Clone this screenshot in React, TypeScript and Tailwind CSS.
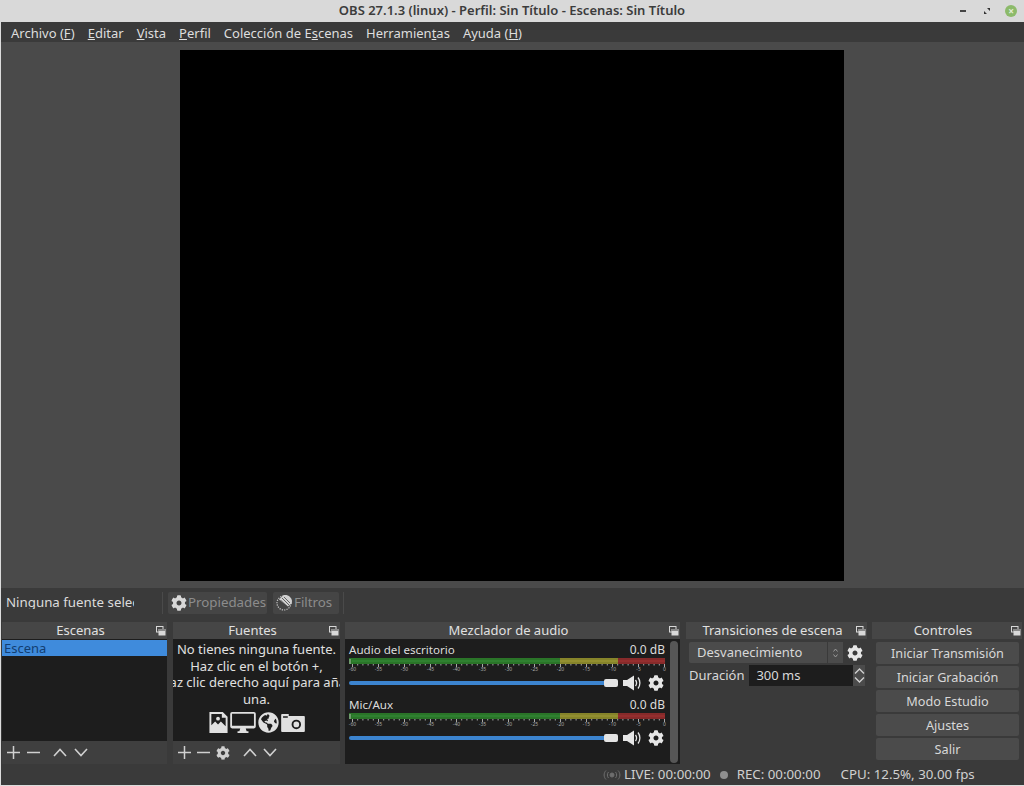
import React from "react";
import { FaCog, FaGlobeAmericas } from "react-icons/fa";

const menus: [string, string, string][] = [
  ["Archivo (", "F", ")"],
  ["", "E", "ditar"],
  ["", "V", "ista"],
  ["", "P", "erfil"],
  ["Colección de E", "s", "cenas"],
  ["Herramien", "t", "as"],
  ["Ayuda (", "H", ")"],
];

const scale = [-60, -55, -50, -45, -40, -35, -30, -25, -20, -15, -10, -5, 0];

// small ticks of the meter, one per dB, a longer one every 5
const ticks = Array.from({ length: 61 }, (_, i) => {
  const x = 3.5 + i * 5.2;
  return `M${x} 0v${i % 5 === 0 ? 3 : 1.5}`;
}).join("");

const FloatIcon = () => (
  <svg width="10" height="10" viewBox="0 0 10 10" className="shrink-0">
    <rect x="0.5" y="0.5" width="6.5" height="5.5" fill="none" stroke="#d8d8d8" />
    <rect x="2.5" y="3" width="7" height="6.5" fill="#d8d8d8" />
    <rect x="2.5" y="3" width="7" height="2" fill="#8a8a8a" />
  </svg>
);

const Plus = () => (
  <svg width="13" height="13" viewBox="0 0 13 13" stroke="#d0d0d0" strokeWidth="1.5">
    <path d="M0 6.5h13M6.5 0v13" />
  </svg>
);
const Minus = () => (
  <svg width="13" height="13" viewBox="0 0 13 13" stroke="#d0d0d0" strokeWidth="1.5">
    <path d="M0 6.5h13" />
  </svg>
);
const Up = () => (
  <svg width="14" height="9" viewBox="0 0 14 9" fill="none" stroke="#d0d0d0" strokeWidth="1.6">
    <path d="M1 8l6-6.5L13 8" />
  </svg>
);
const Down = () => (
  <svg width="14" height="9" viewBox="0 0 14 9" fill="none" stroke="#d0d0d0" strokeWidth="1.6">
    <path d="M1 1l6 6.5L13 1" />
  </svg>
);

const Dock = ({ title, className, children }: { title: string; className: string; children: React.ReactNode }) => (
  <div className={`flex flex-col ${className}`}>
    <div className="relative flex h-[17px] shrink-0 items-center justify-center bg-[#464646] pr-[8px] text-[13px] leading-none text-[#e0e0e0]">
      {title}
      <span className="absolute right-[1px] top-[4px]">
        <FloatIcon />
      </span>
    </div>
    {children}
  </div>
);

const Meter = () => (
  <div className="w-[316px]">
    <div className="flex h-[6px] bg-[#222]">
      <div className="flex w-[211px] items-center bg-[#2a7428]">
        <div className="h-[5px] w-[2px] bg-[#6f9a6c]" />
        <div className="ml-[1px] h-[2px] flex-1 bg-[#2f8030]" />
      </div>
      <div className="flex w-[58px] items-center bg-[#86842a]">
        <div className="h-[2px] flex-1 bg-[#938f30]" />
      </div>
      <div className="flex w-[47px] items-center bg-[#862a2a]">
        <div className="h-[2px] flex-1 bg-[#942e2e]" />
      </div>
    </div>
    <svg width="316" height="3" className="block" stroke="#a8a8a8" strokeWidth="1">
      <path d={ticks} />
    </svg>
    <div className="flex h-[5px] justify-between pl-[3px]">
      {scale.map((n) => (
        <div key={n} className="flex w-[1px] justify-center">
          <span className="text-[5px] leading-[5px] text-[#a8a8a8]">{n}</span>
        </div>
      ))}
    </div>
  </div>
);

const Speaker = () => (
  <svg width="18" height="16" viewBox="0 0 18 16" fill="#e6e6e6">
    <path d="M0 5h4l7-4.500v15L4 11H0z" />
    <path d="M12.500 5c1.300 1.800 1.300 4.200 0 6M15 2.500c2.500 3.200 2.500 7.800 0 11" fill="none" stroke="#e6e6e6" strokeWidth="1.3" />
  </svg>
);

const Strip = ({ name }: { name: string }) => (
  <div className="flex flex-col">
    <div className="flex h-[16px] w-[316px] items-center justify-between text-[11.6px] leading-none text-[#dcdcdc]">
      <span>{name}</span>
      <span className="text-[12px]">0.0 dB</span>
    </div>
    <Meter />
    <div className="mt-[1px] flex h-[20px] w-[316px] items-center">
      <div className="h-[4px] w-[255px] rounded-l-sm bg-[#3c84cf]" />
      <div className="h-[8px] w-[14px] rounded-[2px] bg-[#e4e4e4]" />
      <span className="ml-[5px]">
        <Speaker />
      </span>
      <FaCog className="ml-[7px] text-[#e6e6e6]" size={16} />
    </div>
  </div>
);

const Btn = ({ children }: { children: React.ReactNode }) => (
  <div className="flex h-[22px] items-center justify-center rounded-[2px] bg-[#4b4b4b] text-[12.7px] leading-none text-[#d8d8d8]">
    {children}
  </div>
);

export default function App() {
  return (
    <div
      className="flex h-[786px] w-[1024px] flex-col overflow-hidden bg-[#dcdcdc] pb-[1px] pl-[1px]"
      style={{ fontFamily: '"Noto Sans", sans-serif' }}
    >
      {/* title bar */}
      <div className="-ml-[1px] relative flex h-[22px] shrink-0 items-center justify-center bg-[#d9d9d9] text-[13px] font-semibold text-[#3c3c3c]">
        OBS 27.1.3 (linux) - Perfil: Sin Título - Escenas: Sin Título
        <div className="absolute right-[7px] top-[5px] flex items-center">
          <div className="h-[2px] w-[6px] bg-[#444]" />
          <svg width="6" height="6" viewBox="0 0 6 6" fill="#333" className="ml-[18px]">
            <path d="M3 0h3v3zM3 6H0V3z" />
          </svg>
          <div className="ml-[15px] flex h-[12px] w-[12px] items-center justify-center rounded-full bg-[#8cba6a] text-[10px] font-bold leading-none text-[#e4eed8]">
            ×
          </div>
        </div>
      </div>
      {/* menu */}
      <div className="flex h-[20px] shrink-0 items-center gap-[13px] bg-[#3a3a3a] pl-[10px] pt-[2px] text-[13px] leading-none text-[#dedede]">
        {menus.map(([a, b, c]) => (
          <span key={a + b}>
            {a}
            <u>{b}</u>
            {c}
          </span>
        ))}
      </div>
      {/* preview */}
      <div className="flex h-[546px] shrink-0 justify-center bg-[#4a4a4a] pr-[1px] pt-[8px]">
        <div className="h-[531px] w-[664px] bg-black" />
      </div>
      {/* source toolbar */}
      <div className="flex h-[29px] shrink-0 items-center bg-[#3a3a3a] text-[13.3px] leading-none">
        <div className="w-[133px] overflow-hidden whitespace-nowrap pl-[5px] text-[#dcdcdc]">Ninguna fuente seleccionada</div>
        <div className="ml-[28px] h-[22px] w-[1px] bg-[#4a4a4a]" />
        <div className="ml-[5px] flex h-[22px] w-[99px] items-center gap-[1px] rounded-[2px] bg-[#454545] pl-[3px] text-[#8c8c8c]">
          <FaCog className="text-[#d8d8d8]" size={16} />
          Propiedades
        </div>
        <div className="ml-[6px] flex h-[22px] w-[66px] items-center gap-[1px] rounded-[2px] bg-[#454545] pl-[3px] text-[#8c8c8c]">
          <svg width="17" height="17" viewBox="0 0 17 17" className="shrink-0">
            <circle cx="8" cy="9" r="7" fill="none" stroke="#c8c8c8" strokeWidth="1.2" strokeDasharray="1.2 1.2" />
            <path d="M3 5.500L7 1.500c2-1 5-.5 7 1.500s2.500 4.500 1.500 6.500l-3.500 3z" fill="#d0d0d0" />
            <path d="M6 4l7 7M8 3l6 6M4.500 6l6 6" stroke="#454545" strokeWidth="0.8" />
          </svg>
          Filtros
        </div>
        <div className="ml-[4px] h-[22px] w-[1px] bg-[#4a4a4a]" />
      </div>
      {/* docks */}
      <div className="flex h-[147px] shrink-0 gap-[5px] bg-[#3a3a3a] pl-[1px] pt-[5px]">
        <Dock title="Escenas" className="w-[165px]">
          <div className="flex-1 bg-[#1d1d1d] pt-[1px]">
            <div className="flex h-[16px] items-center bg-[#3f8bdc] pl-[2px] text-[13px] leading-none text-[#123e72]">Escena</div>
          </div>
          <div className="flex h-[23px] items-center gap-[7px] bg-[#3f3f3f] pl-[5px]">
            <Plus />
            <Minus />
            <span className="ml-[6px]">
              <Up />
            </span>
            <Down />
          </div>
        </Dock>
        <Dock title="Fuentes" className="ml-[1px] w-[167px]">
          <div className="flex flex-1 flex-col items-center overflow-hidden bg-[#1d1d1d] pt-[2px] text-center text-[13px] leading-[16.500px] text-[#e0e0e0]">
            <div>No tienes ninguna fuente.</div>
            <div>Haz clic en el botón +,</div>
            <div className="flex w-full justify-center whitespace-nowrap">o haz clic derecho aquí para añadir</div>
            <div>una.</div>
            <div className="mt-[5px] flex items-center gap-[2px]">
              <svg width="19" height="21" viewBox="0 0 19 22" fill="#e0e0e0">
                <path fillRule="evenodd" d="M0 0h14l5 5v17H0zM2 2v12l4-4 3 3 3-3 5 5V6h-4V2z" />
                <circle cx="9" cy="7" r="2" />
              </svg>
              <svg width="26" height="21" viewBox="0 0 28 23" fill="#e0e0e0">
                <path fillRule="evenodd" d="M2 0h24a2 2 0 0 1 2 2v14a2 2 0 0 1-2 2H17l1 3h2v2H8v-2h2l1-3H2a2 2 0 0 1-2-2V2a2 2 0 0 1 2-2zM2 2v13h24V2z" />
              </svg>
              <FaGlobeAmericas className="text-[#e0e0e0]" size={21} />
              <svg width="24" height="18" viewBox="0 0 25 19" fill="#e0e0e0">
                <path fillRule="evenodd" d="M1 0h7v2h16a1 1 0 0 1 1 1v15a1 1 0 0 1-1 1H1a1 1 0 0 1-1-1V1a1 1 0 0 1 1-1zM2 4h5V2.500H2zM16 6a5 5 0 1 0 0 10 5 5 0 0 0 0-10zm0 2a3 3 0 1 1 0 6 3 3 0 0 1 0-6z" />
              </svg>
            </div>
          </div>
          <div className="flex h-[23px] items-center gap-[6px] bg-[#3f3f3f] pl-[5px]">
            <Plus />
            <Minus />
            <FaCog className="text-[#d0d0d0]" size={14} />
            <span className="ml-[7px]">
              <Up />
            </span>
            <Down />
          </div>
        </Dock>
        <Dock title="Mezclador de audio" className="w-[335px]">
          <div className="relative flex flex-1 flex-col gap-[4px] bg-[#1d1d1d] pl-[4px] pt-[3px]">
            <Strip name="Audio del escritorio" />
            <Strip name="Mic/Aux" />
            <div className="absolute bottom-[1px] right-[2px] top-[2px] w-[8px] rounded bg-[#565656]" />
          </div>
        </Dock>
        <Dock title="Transiciones de escena" className="ml-[1px] w-[181px]">
          <div className="flex flex-col gap-[2px] pt-[3px] text-[13px] leading-none text-[#d8d8d8]">
            <div className="flex items-center">
              <div className="ml-[3px] flex h-[21px] w-[138px] items-center rounded-l-[2px] bg-[#4b4b4b] pl-[8px]">Desvanecimiento</div>
              <div className="flex h-[21px] w-[16px] flex-col items-center justify-center border-l border-[#3a3a3a] bg-[#4b4b4b]">
                <svg width="5" height="10" viewBox="0 0 5 10" fill="none" stroke="#9a9a9a">
                  <path d="M.5 3.500l2-2.500 2 2.500M.5 6.500l2 2.500 2-2.500" />
                </svg>
              </div>
              <FaCog className="ml-[4px] text-[#e6e6e6]" size={16} />
            </div>
            <div className="flex items-center">
              <span className="ml-[3px]">Duración</span>
              <div className="ml-[5px] flex h-[21px] w-[104px] items-center bg-[#1d1d1d] pl-[7px]">300 ms</div>
              <div className="flex h-[21px] w-[12px] flex-col items-center justify-center gap-[1px] bg-[#4b4b4b]">
                <svg width="11" height="8" viewBox="0 0 11 8" fill="none" stroke="#d0d0d0" strokeWidth="1.4">
                  <path d="M1 6.500L5.500 2 10 6.500" />
                </svg>
                <svg width="11" height="8" viewBox="0 0 11 8" fill="none" stroke="#d0d0d0" strokeWidth="1.4">
                  <path d="M1 1.500L5.500 6 10 1.500" />
                </svg>
              </div>
            </div>
          </div>
        </Dock>
        <Dock title="Controles" className="w-[150px]">
          <div className="flex flex-col gap-[2px] pl-[4px] pr-[3px] pt-[3px]">
            <Btn>Iniciar Transmisión</Btn>
            <Btn>Iniciar Grabación</Btn>
            <Btn>Modo Estudio</Btn>
            <Btn>Ajustes</Btn>
            <Btn>Salir</Btn>
          </div>
        </Dock>
      </div>
      {/* status bar */}
      <div className="flex flex-1 items-center bg-[#3a3a3a] pl-[602px] text-[13.3px] leading-none text-[#d0d0d0]">
        <svg width="18" height="10" viewBox="0 0 18 10" fill="none" stroke="#6e6e6e" strokeWidth="1">
          <circle cx="9" cy="5" r="2" fill="#6e6e6e" />
          <path d="M5.500 2c-1.500 1.500-1.500 4.500 0 6M12.500 2c1.500 1.500 1.500 4.500 0 6M3 .5c-2.500 2.500-2.500 6.500 0 9M15 .5c2.500 2.500 2.500 6.500 0 9" />
        </svg>
        <span className="ml-[3px]">LIVE: 00:00:00</span>
        <div className="ml-[9px] h-[8px] w-[8px] rounded-full bg-[#8f8f8f]" />
        <span className="ml-[9px]">REC: 00:00:00</span>
        <span className="ml-[20px]">CPU: 12.5%, 30.00 fps</span>
      </div>
    </div>
  );
}
